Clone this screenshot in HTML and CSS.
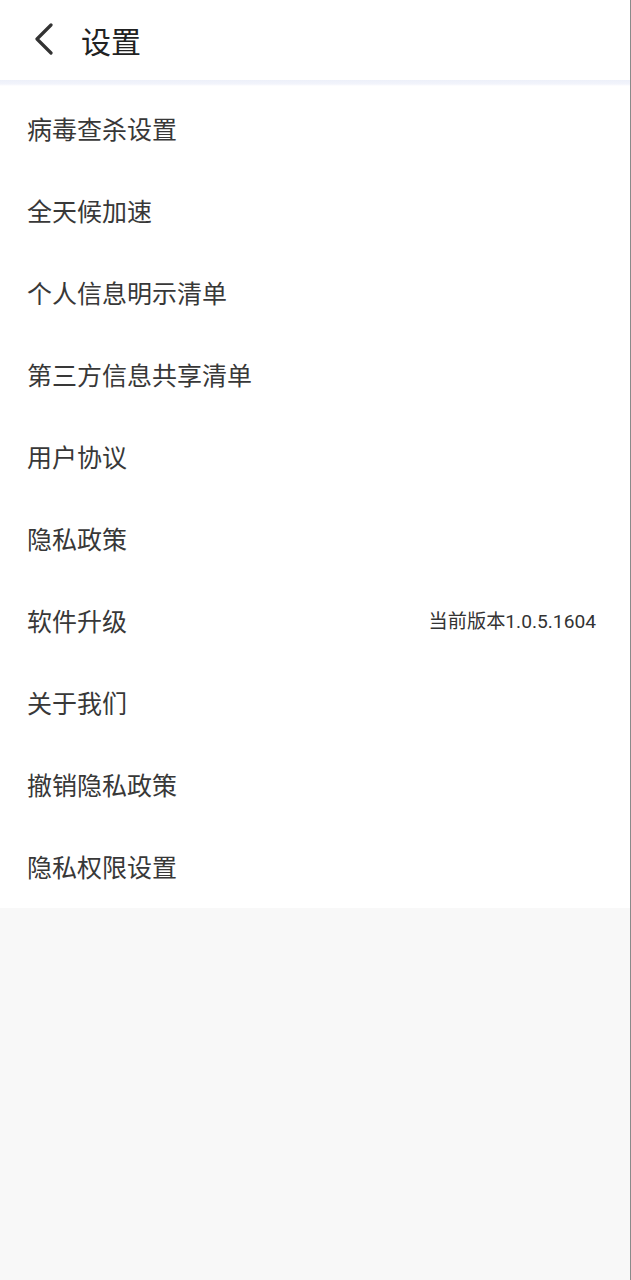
FILE: index.html
```html
<!DOCTYPE html>
<html lang="zh-CN">
<head>
    <meta charset="UTF-8">
    <meta name="viewport" content="width=device-width, initial-scale=1.0">
    <title>设置</title>
    <link rel="stylesheet" href="styles.css">
</head>
<body>
    <div class="page">
        <header class="top-bar">
            <svg class="back-icon" width="24" height="32" viewBox="0 0 24 32">
                <path d="M18 2 L4 16 L18 30" fill="none" stroke="#333" stroke-width="3.2" stroke-linecap="round" stroke-linejoin="round"/>
            </svg>
            <h1 class="title">设置</h1>
        </header>

        <ul class="settings-list">
            <li class="settings-item">病毒查杀设置</li>
            <li class="settings-item">全天候加速</li>
            <li class="settings-item">个人信息明示清单</li>
            <li class="settings-item">第三方信息共享清单</li>
            <li class="settings-item">用户协议</li>
            <li class="settings-item">隐私政策</li>
            <li class="settings-item">
                <span>软件升级</span>
                <span class="version">当前版本1.0.5.1604</span>
            </li>
            <li class="settings-item">关于我们</li>
            <li class="settings-item">撤销隐私政策</li>
            <li class="settings-item">隐私权限设置</li>
        </ul>
    </div>
</body>
</html>
```

FILE: styles.css
```css
body {
    margin: 0;
    font-family: 'Noto Sans CJK SC', sans-serif;
    background-color: #f8f8f8;
    color: #333;
}

.page {
    min-height: 1280px;
    border-right: 1px solid #8a8a8a; /* scrollbar edge */
    box-sizing: border-box;
}

.top-bar {
    height: 80px;
    background-color: #fff;
    display: flex;
    align-items: center;
    padding-left: 33px;
}

.back-icon {
    display: block;
    margin-top: -2px;
}

.title {
    margin: 0 0 0 24px;
    font-size: 30px;
    font-weight: normal;
    line-height: 1;
    color: #222;
}

.settings-list {
    list-style: none;
    margin: 0;
    padding: 8px 0 0 0;
    background: linear-gradient(#edf0f9 0, #f2f4fb 4px, #fff 6px);
}

.settings-item {
    height: 82px;
    display: flex;
    align-items: center;
    justify-content: space-between;
    padding: 0 34px 2px 27px;
    box-sizing: border-box;
    font-size: 25px;
    color: #383838;
    background-color: #fff;
}

.version {
    font-family: Roboto, 'Noto Sans CJK SC', sans-serif;
    font-size: 19.2px;
    color: #333;
}
```
